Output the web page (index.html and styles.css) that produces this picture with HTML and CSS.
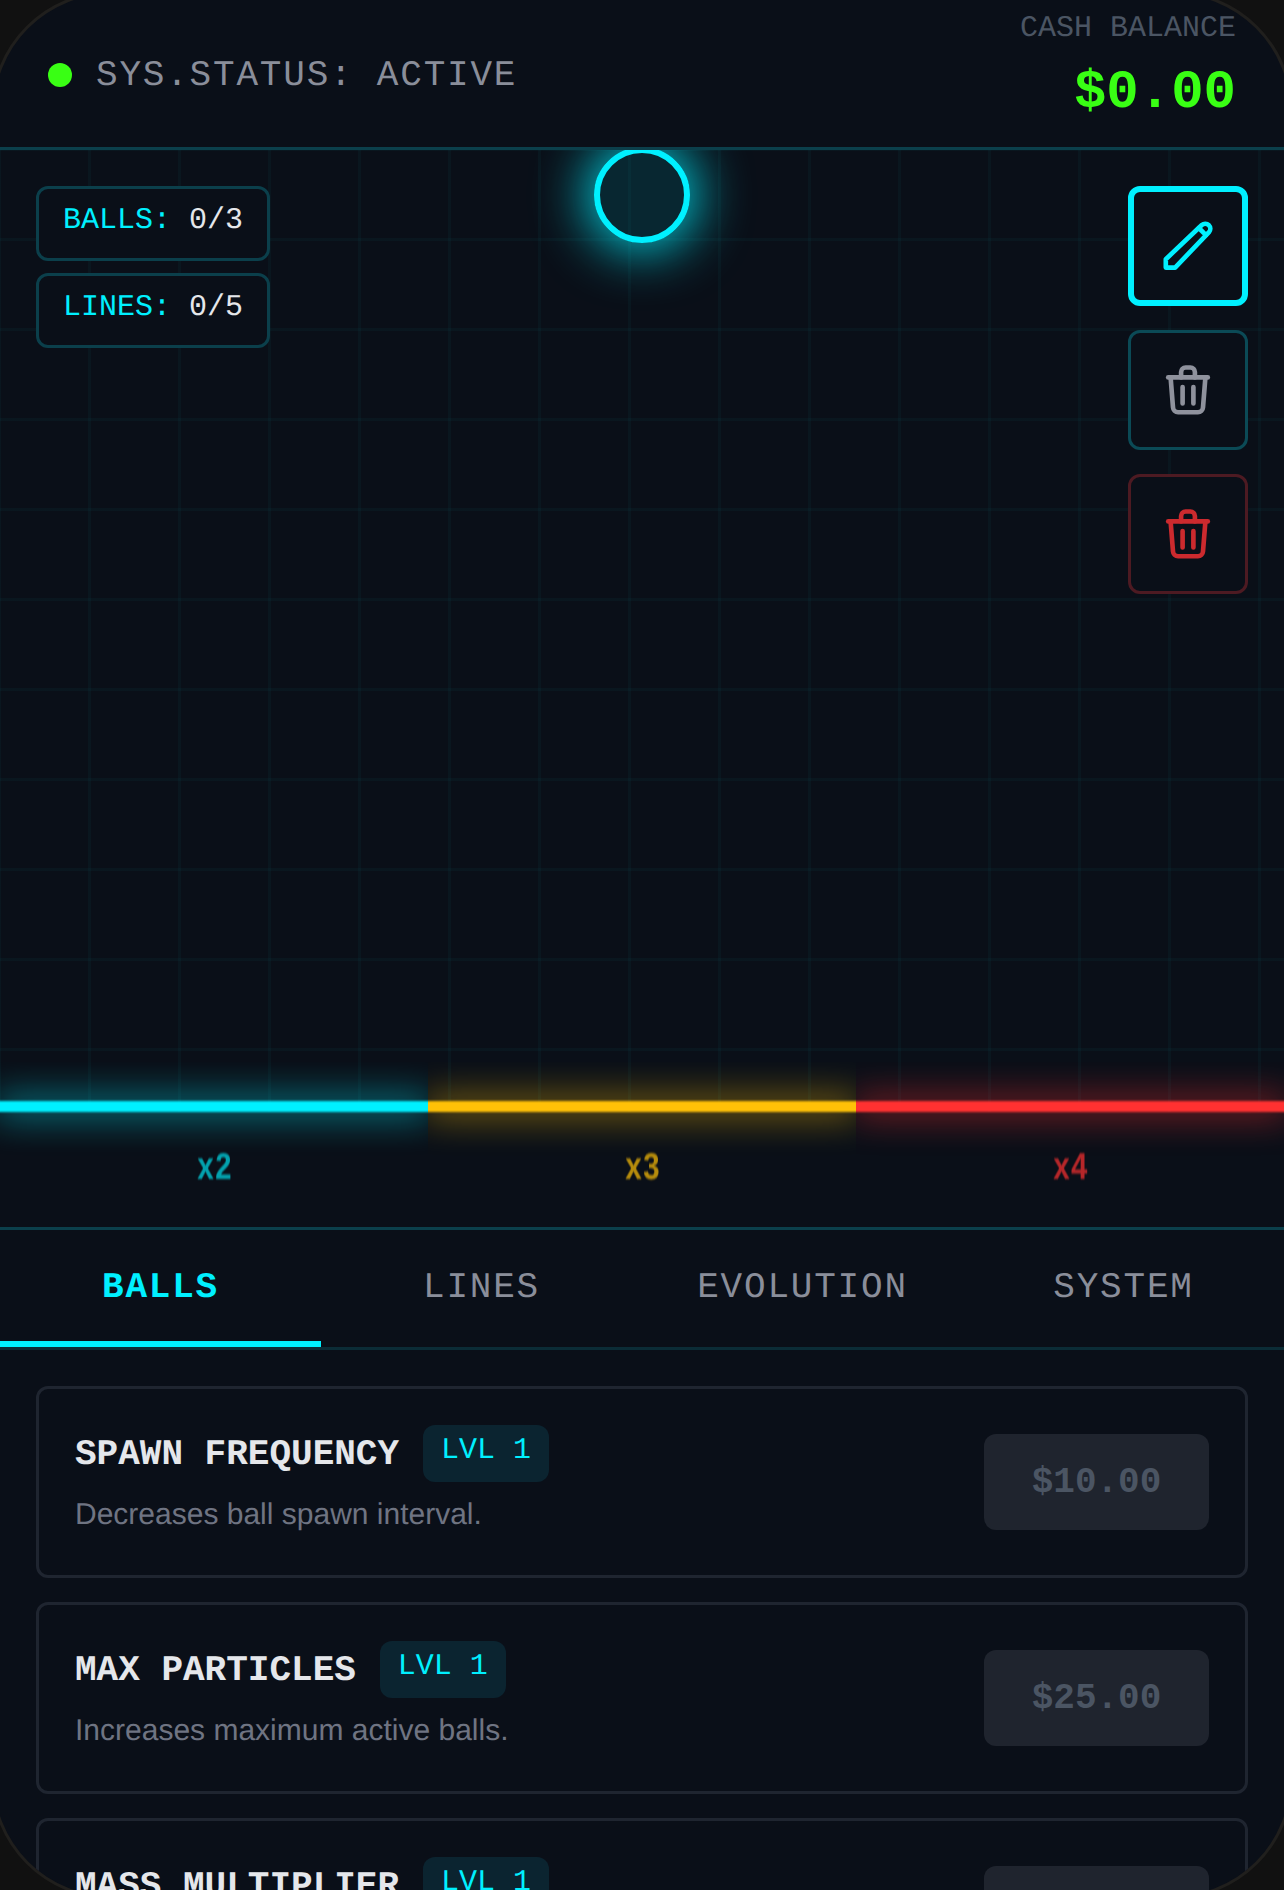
FILE: index.html
```html
<!DOCTYPE html>
<html lang="en">
<head>
  <meta charset="UTF-8">
  <meta name="viewport" content="width=device-width, initial-scale=1.0">
  <title>Neon Drop</title>
  <link rel="stylesheet" href="styles.css">
</head>
<body>
  <div class="shell">

    <header class="topbar">
      <div class="status">
        <span class="status-dot"></span>
        <span>SYS.STATUS: ACTIVE</span>
      </div>
      <div class="cash">
        <div class="cash-label">CASH BALANCE</div>
        <div class="cash-value">$0.00</div>
      </div>
    </header>

    <section class="field">
      <div class="ball"></div>

      <div class="hud">
        <div class="counters">
          <div class="counter"><span class="counter-name">BALLS:</span> 0/3</div>
          <div class="counter"><span class="counter-name">LINES:</span> 0/5</div>
        </div>

        <div class="tools">
          <button class="tool active" type="button">
            <svg class="tool-icon" viewBox="0 0 24 24">
              <path d="M4.6 19.2v-2.8L16.6 5a1.7 1.7 0 0 1 2.4 2.4L7.7 19.2z"/>
              <path d="M15.6 6l2.4 2.4"/>
            </svg>
          </button>
          <button class="tool" type="button">
            <svg class="tool-icon" viewBox="0 0 24 24">
              <path d="M5.4 7.8h13.2"/>
              <path d="M9.7 7.8V6a1.5 1.5 0 0 1 1.5-1.5h1.6A1.5 1.5 0 0 1 14.3 6v1.8"/>
              <path d="M6.2 7.8l.8 10a1.7 1.7 0 0 0 1.7 1.6h6.6a1.7 1.7 0 0 0 1.7-1.6l.8-10"/>
              <path d="M10.2 11v5.5M13.8 11v5.5"/>
            </svg>
          </button>
          <button class="tool danger" type="button">
            <svg class="tool-icon" viewBox="0 0 24 24">
              <path d="M5.4 7.8h13.2"/>
              <path d="M9.7 7.8V6a1.5 1.5 0 0 1 1.5-1.5h1.6A1.5 1.5 0 0 1 14.3 6v1.8"/>
              <path d="M6.2 7.8l.8 10a1.7 1.7 0 0 0 1.7 1.6h6.6a1.7 1.7 0 0 0 1.7-1.6l.8-10"/>
              <path d="M10.2 11v5.5M13.8 11v5.5"/>
            </svg>
          </button>
        </div>
      </div>

      <div class="zones">
        <div class="zone cyan">
          <div class="zone-line"></div>
          <div class="zone-label"><span>x2</span></div>
        </div>
        <div class="zone amber">
          <div class="zone-line"></div>
          <div class="zone-label"><span>x3</span></div>
        </div>
        <div class="zone red">
          <div class="zone-line"></div>
          <div class="zone-label"><span>x4</span></div>
        </div>
      </div>
    </section>

    <nav class="tabs">
      <div class="tab active">BALLS</div>
      <div class="tab">LINES</div>
      <div class="tab">EVOLUTION</div>
      <div class="tab">SYSTEM</div>
    </nav>

    <main class="upgrades">
      <div class="card">
        <div class="card-info">
          <div class="card-head">
            <span class="card-title">SPAWN FREQUENCY</span>
            <span class="badge">LVL 1</span>
          </div>
          <p class="card-desc">Decreases ball spawn interval.</p>
        </div>
        <button class="buy" type="button">$10.00</button>
      </div>

      <div class="card">
        <div class="card-info">
          <div class="card-head">
            <span class="card-title">MAX PARTICLES</span>
            <span class="badge">LVL 1</span>
          </div>
          <p class="card-desc">Increases maximum active balls.</p>
        </div>
        <button class="buy" type="button">$25.00</button>
      </div>

      <div class="card">
        <div class="card-info">
          <div class="card-head">
            <span class="card-title">MASS MULTIPLIER</span>
            <span class="badge">LVL 1</span>
          </div>
          <p class="card-desc">Increases ball value.</p>
        </div>
        <button class="buy" type="button">$50.00</button>
      </div>
    </main>

  </div>
</body>
</html>
```

FILE: styles.css
```css
html, body {
  margin: 0;
  height: 1890px;
  overflow: hidden;
  background-color: #111111;
}

body {
  font-family: "Liberation Mono", monospace;
  text-rendering: geometricPrecision;
}

/* Phone frame, a little larger than the window so the corners get cut */
.shell {
  width: 1302px;
  height: 1908px;
  margin: -9px;
  padding: 6px;
  box-sizing: border-box;
  border: 3px solid #201f1d;
  border-radius: 120px;
  overflow: hidden;
  background-color: #0a0f18;
}

/* Top bar */
.topbar {
  height: 150px;
  box-sizing: border-box;
  padding: 0 48px;
  display: flex;
  justify-content: space-between;
  align-items: center;
  border-bottom: 3px solid #0b3f4b;
}

.status {
  display: flex;
  align-items: center;
  gap: 24px;
  padding-top: 3px;
  font-size: 36px;
  letter-spacing: 1.8px;
  color: #8a8e9a;
}

.status-dot {
  width: 24px;
  height: 24px;
  border-radius: 50%;
  background-color: #39ff14;
}

.cash {
  text-align: right;
  padding-bottom: 5px;
}

.cash-label {
  font-size: 30px;
  line-height: 45px;
  color: #4b5563;
}

.cash-value {
  font-size: 54px;
  line-height: 84px;
  font-weight: bold;
  color: #39ff14;
}

/* Game field */
.field {
  position: relative;
  height: 1077px;
  overflow: hidden;
  display: flex;
  flex-direction: column;
  justify-content: space-between;
  background-image:
    linear-gradient(to right, rgba(0, 240, 255, 0.032) 3px, transparent 3px),
    linear-gradient(to bottom, rgba(0, 240, 255, 0.032) 3px, transparent 3px);
  background-size: 90px 90px;
  background-position: -2px -2px;
}

.ball {
  position: absolute;
  left: 594px;
  top: -3px;
  width: 96px;
  height: 96px;
  box-sizing: border-box;
  border: 6px solid #00f0ff;
  border-radius: 50%;
  background-color: rgba(0, 240, 255, 0.11);
  box-shadow: 0 0 54px 6px rgba(0, 240, 255, 0.9);
  filter: blur(0.7px);
}

.hud {
  display: flex;
  justify-content: space-between;
  padding: 36px;
}

.counters {
  display: flex;
  flex-direction: column;
  align-items: flex-start;
  gap: 12px;
}

.counter {
  padding: 10px 24px 14px;
  font-size: 30px;
  line-height: 45px;
  white-space: pre;
  color: #e5e7eb;
  background-color: #0a0f18;
  border: 3px solid #0b3f4b;
  border-radius: 12px;
}

.counter-name {
  color: #00f0ff;
}

.tools {
  display: flex;
  flex-direction: column;
  gap: 24px;
}

.tool {
  width: 120px;
  height: 120px;
  padding: 0;
  display: flex;
  align-items: center;
  justify-content: center;
  color: #8f929d;
  background-color: #0a0f18;
  border: 3px solid #0b4a56;
  border-radius: 12px;
}

.tool.active {
  color: #00f0ff;
  border: 6px solid #00f0ff;
}

.tool.danger {
  color: #cc2a2e;
  border-color: #4d1a22;
}

.tool-icon {
  width: 72px;
  height: 72px;
  fill: none;
  stroke: currentColor;
  stroke-width: 1.55;
  stroke-linecap: round;
  stroke-linejoin: round;
}

/* Multiplier zones at the bottom of the field */
.zones {
  display: flex;
}

.zone {
  flex: 1;
  overflow: hidden;
  padding-top: 39px;
}

.zone-line {
  position: relative;
  z-index: 1;
  height: 11px;
  margin: 0 -4px;
  filter: blur(1px);
}

.zone-label {
  height: 115px;
  padding-bottom: 2px;
  box-sizing: border-box;
  display: flex;
  align-items: center;
  justify-content: center;
  background-color: #0a0f18;
  font-size: 39px;
  font-weight: bold;
}

.zone-label span {
  transform: scaleX(0.75);
  opacity: 0.7;
  filter: blur(1px);
}

.zone.cyan .zone-line {
  background-color: #00f0ff;
  box-shadow: 0 0 36px #00f0ff;
}

.zone.cyan .zone-label {
  color: #00e0ee;
}

.zone.amber .zone-line {
  background-color: #ffc107;
  box-shadow: 0 0 36px #ffc107;
}

.zone.amber .zone-label {
  color: #ffc107;
}

.zone.red .zone-line {
  background-color: #ff3131;
  box-shadow: 0 0 36px #ff3131;
}

.zone.red .zone-label {
  color: #ff3131;
}

/* Tabs */
.tabs {
  display: flex;
  height: 123px;
  box-sizing: border-box;
  border-top: 3px solid #0b3f4b;
  border-bottom: 3px solid #0b2c36;
}

.tab {
  flex: 1;
  display: flex;
  align-items: center;
  justify-content: center;
  padding-top: 3px;
  font-size: 36px;
  letter-spacing: 1.8px;
  color: #8a8e9a;
  border-bottom: 6px solid transparent;
}

.tab.active {
  font-weight: bold;
  color: #00f0ff;
  border-bottom-color: #00f0ff;
}

/* Upgrade cards */
.upgrades {
  padding: 36px;
  display: flex;
  flex-direction: column;
  gap: 24px;
}

.card {
  height: 192px;
  box-sizing: border-box;
  padding: 36px;
  display: flex;
  justify-content: space-between;
  align-items: center;
  border: 3px solid #1f2530;
  border-radius: 12px;
}

.card-info {
  align-self: flex-start;
}

.card-head {
  display: flex;
  align-items: center;
  gap: 24px;
}

.card-title {
  padding-top: 2px;
  font-size: 36px;
  font-weight: bold;
  color: #e5e7eb;
}

.badge {
  padding: 4px 18px 8px;
  font-size: 30px;
  line-height: 45px;
  color: #00f0ff;
  background-color: #0b2430;
  border-radius: 12px;
}

.card-desc {
  margin: 10px 0 0;
  font-family: "Liberation Sans", sans-serif;
  font-size: 30px;
  line-height: 45px;
  color: #6f7482;
}

.buy {
  width: 225px;
  height: 96px;
  padding: 0;
  border: none;
  border-radius: 12px;
  font-family: "Liberation Mono", monospace;
  font-size: 36px;
  font-weight: bold;
  color: #4b5563;
  background-color: #1f242e;
}
```
